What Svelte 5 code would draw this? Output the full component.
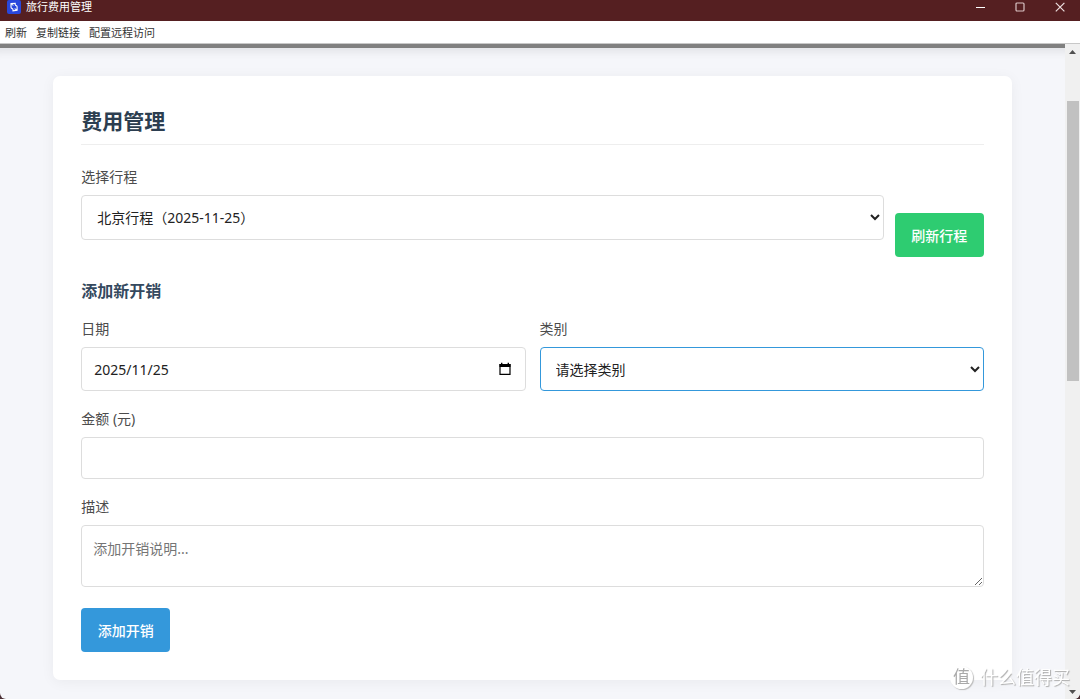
<script>
  const menuItems = ["刷新", "复制链接", "配置远程访问"];
  const trips = ["北京行程（2025-11-25）"];
  const categories = ["交通", "住宿", "餐饮", "门票", "购物", "其他"];

  let trip = trips[0];
  let date = "2025/11/25";
  let category = "";
  let amount = "";
  let description = "";

  const addExpense = () => {
    amount = "";
    description = "";
    category = "";
  };
</script>

<style>
  :global(body) {
    background: #4b3035;
  }

  .window {
    display: flex;
    flex-direction: column;
    height: 100vh;
    overflow: hidden;
    border-radius: 0 0 6px 6px;
    background: #f5f6fa;
    font-family: "Noto Sans", "Noto Sans CJK SC", sans-serif;
    font-size: 14px;
    line-height: 21px;
  }

  button,
  input,
  select,
  textarea {
    font: inherit;
  }

  .titlebar {
    display: flex;
    flex: none;
    align-items: center;
    height: 21px;
    background: #551f21;
    color: white;
    font-size: 11px;
  }

  .logo {
    width: 14px;
    height: 14px;
    margin: 0 5px 8px 7px;
  }

  .title {
    flex: 1;
    margin-bottom: 8px;
  }

  .titlebar button {
    width: 40px;
    height: 21px;
    padding: 0 0 7px;
    border: none;
    background: none;
    line-height: 0;
  }

  .menu {
    display: flex;
    flex: none;
    gap: 9px;
    align-items: center;
    height: 22px;
    padding: 0 5px;
    border-bottom: 1px solid #c8c8c8;
    background: white;
  }

  .menu button {
    padding: 0;
    border: none;
    background: none;
    color: #333;
    font-size: 11px;
  }

  .view {
    display: flex;
    flex: 1;
    min-height: 0;
  }

  .page {
    flex: 1;
    overflow: hidden;
    border-top: 4px solid #808080;
    box-shadow: inset 0 12px 8px -8px rgba(0, 0, 0, 0.08);
  }

  .card {
    box-sizing: border-box;
    width: 90%;
    margin: 28px auto;
    padding: 28px;
    border-radius: 7px;
    background: white;
    box-shadow: 0 2px 14px rgba(0, 0, 0, 0.05);
  }

  h2 {
    margin: 0 0 21px;
    padding-bottom: 6px;
    border-bottom: 1px solid #eee;
    color: #2c3e50;
    font-size: 21px;
    line-height: 34px;
  }

  h3 {
    margin: 21px 0 13px;
    color: #34495e;
    font-size: 16px;
    line-height: 27px;
  }

  .row {
    display: flex;
    gap: 14px;
  }

  .trip {
    gap: 11px;
    align-items: flex-end;
  }

  .trip select {
    height: 45px;
  }

  .group {
    flex: 1;
    min-width: 0;
    margin-bottom: 17px;
  }

  label {
    display: block;
    margin-bottom: 8px;
    color: #4c4c4c;
  }

  input,
  select,
  textarea {
    display: block;
    box-sizing: border-box;
    width: 100%;
    border: 1px solid #ddd;
    border-radius: 4px;
    outline: none;
    background: white;
    color: #222;
  }

  input {
    height: 42px;
    padding: 0 12px;
  }

  select,
  .date input {
    height: 44px;
  }

  select {
    padding: 0 11px;
  }

  .category {
    border-color: #3498db;
  }

  .date {
    position: relative;
  }

  .date button {
    position: absolute;
    top: 15px;
    right: 15px;
    padding: 0;
    border: none;
    background: none;
    line-height: 0;
  }

  textarea {
    height: 62px;
    padding: 12px 11px;
    resize: vertical;
  }

  textarea::placeholder {
    color: #757575;
  }

  .btn {
    flex: none;
    min-width: 89px;
    height: 44px;
    padding: 0 16px;
    border: none;
    border-radius: 4px;
    color: white;
    font-weight: 500;
  }

  .refresh {
    background: #2ecc71;
  }

  .add {
    margin-top: 4px;
    background: #3498db;
  }

  .scrollbar {
    display: flex;
    flex-direction: column;
    width: 15px;
    background: #f0f0f0;
  }

  .scrollbar button {
    height: 15px;
    padding: 0;
    border: none;
    background: none;
    line-height: 0;
  }

  .track {
    flex: 1;
    padding: 42px 1px 0 2px;
  }

  .thumb {
    height: 48%;
    background: #c1c1c1;
  }

  .watermark {
    position: fixed;
    right: 10px;
    bottom: 10px;
    display: flex;
    gap: 7px;
    align-items: center;
    color: white;
    font-size: 18px;
    line-height: 24px;
    text-shadow: 1px 1px 1px #aaa;
  }

  .watermark b {
    width: 23px;
    height: 23px;
    border-radius: 50%;
    background: white;
    box-shadow: 1px 1px 1px #bbb;
    color: #aaa;
    font-size: 17px;
    font-weight: 400;
    line-height: 22px;
    text-align: center;
    text-shadow: none;
  }
</style>

<div class="window">
  <header class="titlebar">
    <svg class="logo" viewBox="0 0 14 14">
      <rect width="14" height="14" rx="2" fill="#2947dc" />
      <path
        d="M4 7.8V3.6L8.2 3.3V5M3.9 3.6L6.4 5.4M10.1 6.2V10.3L6 10.8V9.2M10.1 10.3L7.6 8.6M4 7.8L6 9.2M8.2 5L10.1 6.2"
        fill="none"
        stroke="white"
        stroke-width="1.1" />
    </svg>
    <span class="title">旅行费用管理</span>
    <button aria-label="最小化">
      <svg width="10" height="10"><path d="M1 5.5h9" stroke="white" /></svg>
    </button>
    <button aria-label="最大化">
      <svg width="10" height="10">
        <rect x="1" y="1" width="8" height="8" rx="1" fill="none" stroke="#d9c3c3" stroke-width="1.2" />
      </svg>
    </button>
    <button aria-label="关闭">
      <svg width="10" height="10">
        <path d="M.8 .8l8.6 8.6M9.4 .8L.8 9.4" stroke="#ecdede" stroke-width="1.2" />
      </svg>
    </button>
  </header>

  <nav class="menu">
    {#each menuItems as item}
      <button>{item}</button>
    {/each}
  </nav>

  <div class="view">
    <main class="page">
      <section class="card">
        <h2>费用管理</h2>
        <div class="row trip">
          <div class="group">
            <label for="trip">选择行程</label>
            <select id="trip" bind:value={trip}>
              {#each trips as name}
                <option value={name}>{name}</option>
              {/each}
            </select>
          </div>
          <button class="btn refresh">刷新行程</button>
        </div>

        <h3>添加新开销</h3>
        <form on:submit|preventDefault={addExpense}>
          <div class="row">
            <div class="group">
              <label for="date">日期</label>
              <div class="date">
                <input id="date" type="text" bind:value={date} />
                <button type="button" aria-label="选择日期">
                  <svg width="12" height="14">
                    <path d="M1 2.5h10v9.8H1z" fill="none" stroke="black" stroke-width="1.2" />
                    <path d="M.5 2h11v3H.5zM2 .7h1.4v2H2zM8.6 .7H10v2H8.6z" />
                  </svg>
                </button>
              </div>
            </div>
            <div class="group">
              <label for="category">类别</label>
              <select id="category" class="category" bind:value={category}>
                <option value="">请选择类别</option>
                {#each categories as name}
                  <option value={name}>{name}</option>
                {/each}
              </select>
            </div>
          </div>
          <div class="group">
            <label for="amount">金额 (元)</label>
            <input id="amount" type="text" bind:value={amount} />
          </div>
          <div class="group">
            <label for="description">描述</label>
            <textarea
              id="description"
              placeholder="添加开销说明..."
              bind:value={description}></textarea>
          </div>
          <button class="btn add">添加开销</button>
        </form>
      </section>
    </main>

    <div class="scrollbar">
      <button aria-label="向上滚动">
        <svg width="7" height="4"><path d="M0 4L3.5 0L7 4z" fill="#505050" /></svg>
      </button>
      <div class="track"><div class="thumb"></div></div>
      <button aria-label="向下滚动">
        <svg width="7" height="4"><path d="M0 0L3.5 4L7 0z" fill="#505050" /></svg>
      </button>
    </div>
  </div>

  <div class="watermark"><b>值</b><span>什么值得买</span></div>
</div>
